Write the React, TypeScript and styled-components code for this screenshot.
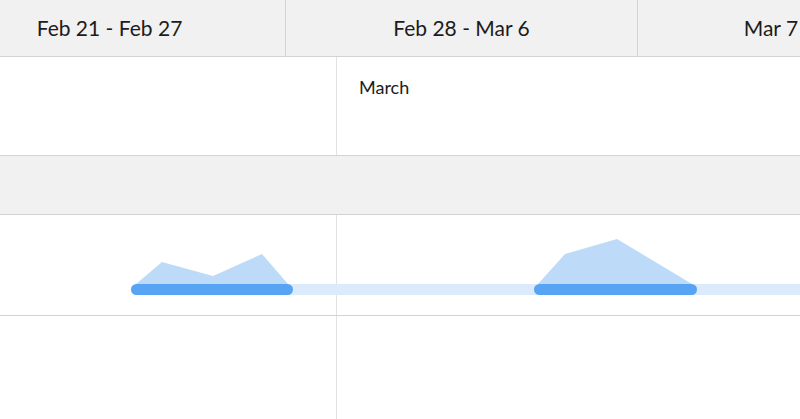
import React from "react";
import styled, { createGlobalStyle } from "styled-components";

const Global = createGlobalStyle`
  html, body { margin: 0; padding: 0; background: #ffffff; }
  body { font-family: Lato, "Open Sans", "Noto Sans", sans-serif; color: #1a1a1a; }
  #root { width: 800px; height: 419px; overflow: hidden; }
`;

const Viewport = styled.div`
  width: 800px;
  height: 419px;
  overflow: hidden;
  display: flex;
  flex-direction: column;
`;

const Track = styled.div`
  display: flex;
  margin-left: -66px;
  width: 1200px;
`;

const HeaderBar = styled.div`
  background: #f1f1f1;
  border-bottom: 1px solid #d3d3d3;
  height: 56px;
  flex: none;
  overflow: hidden;
`;

const WeekCell = styled.div`
  flex: none;
  width: 352px;
  height: 56px;
  box-sizing: border-box;
  border-right: 1px solid #d3d3d3;
  display: flex;
  align-items: center;
  justify-content: center;
  font-size: 21px;
  color: #1c1c1c;
  padding-bottom: 2px;
`;

const Row = styled.div<{ $h: number; $gray?: boolean }>`
  position: relative;
  flex: none;
  height: ${(p) => p.$h}px;
  background: ${(p) => (p.$gray ? "#f1f1f1" : "#ffffff")};
  border-bottom: 1px solid #d3d3d3;
  overflow: hidden;
`;

const MonthCell = styled.div<{ $w?: number }>`
  flex: ${(p) => (p.$w ? "none" : "1")};
  width: ${(p) => (p.$w ? `${p.$w}px` : "auto")};
  box-sizing: border-box;
  border-right: ${(p) => (p.$w ? "1px solid #e2e2e2" : "none")};
  height: 100%;
  padding: 19px 22px;
  font-size: 18px;
  color: #1c1c1c;
`;

const Cells = styled(Track)`
  height: 100%;
`;

const Chart = styled.svg`
  position: absolute;
  left: 0;
  top: 0;
`;

const weeks = ["Feb 21 - Feb 27", "Feb 28 - Mar 6", "Mar 7 - Mar 13"];

export default function App() {
  return (
    <>
      <Global />
      <Viewport>
        <HeaderBar>
          <Track>
            {weeks.map((w) => (
              <WeekCell key={w}>{w}</WeekCell>
            ))}
          </Track>
        </HeaderBar>
        <Row $h={98}>
          <Cells>
            <MonthCell $w={403} />
            <MonthCell>March</MonthCell>
          </Cells>
        </Row>
        <Row $h={58} $gray />
        <Row $h={100}>
          <Cells>
            <MonthCell $w={403} />
            <MonthCell />
          </Cells>
          <Chart width="800" height="100" viewBox="0 215 800 100">
            <rect x="131" y="284" width="700" height="11" rx="5.5" fill="#dcebfc" />
            <polygon points="136,284 162,262 213,276 262,254 288,284" fill="#bddbf8" />
            <polygon points="538,284 565,254 617,239 692,284" fill="#bddbf8" />
            <rect x="131" y="284" width="162" height="11" rx="5.5" fill="#57a4f5" />
            <rect x="534" y="284" width="163" height="11" rx="5.5" fill="#57a4f5" />
          </Chart>
        </Row>
        <Row $h={110}>
          <Cells>
            <MonthCell $w={403} />
            <MonthCell />
          </Cells>
        </Row>
      </Viewport>
    </>
  );
}
